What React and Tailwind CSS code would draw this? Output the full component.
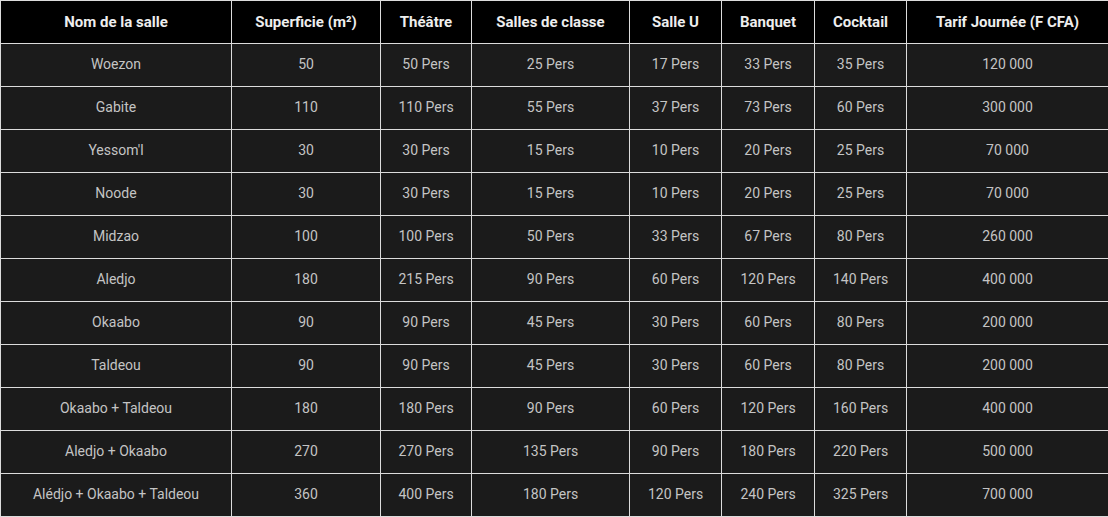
import React from "react";

const headers = [
  "Nom de la salle",
  "Superficie (m²)",
  "Théâtre",
  "Salles de classe",
  "Salle U",
  "Banquet",
  "Cocktail",
  "Tarif Journée (F CFA)",
];

const widths = [231, 149, 91, 158, 92, 93, 92, 202];

const rows = [
  ["Woezon", "50", "50 Pers", "25 Pers", "17 Pers", "33 Pers", "35 Pers", "120 000"],
  ["Gabite", "110", "110 Pers", "55 Pers", "37 Pers", "73 Pers", "60 Pers", "300 000"],
  ["Yessom'l", "30", "30 Pers", "15 Pers", "10 Pers", "20 Pers", "25 Pers", "70 000"],
  ["Noode", "30", "30 Pers", "15 Pers", "10 Pers", "20 Pers", "25 Pers", "70 000"],
  ["Midzao", "100", "100 Pers", "50 Pers", "33 Pers", "67 Pers", "80 Pers", "260 000"],
  ["Aledjo", "180", "215 Pers", "90 Pers", "60 Pers", "120 Pers", "140 Pers", "400 000"],
  ["Okaabo", "90", "90 Pers", "45 Pers", "30 Pers", "60 Pers", "80 Pers", "200 000"],
  ["Taldeou", "90", "90 Pers", "45 Pers", "30 Pers", "60 Pers", "80 Pers", "200 000"],
  ["Okaabo + Taldeou", "180", "180 Pers", "90 Pers", "60 Pers", "120 Pers", "160 Pers", "400 000"],
  ["Aledjo + Okaabo", "270", "270 Pers", "135 Pers", "90 Pers", "180 Pers", "220 Pers", "500 000"],
  ["Alédjo + Okaabo + Taldeou", "360", "400 Pers", "180 Pers", "120 Pers", "240 Pers", "325 Pers", "700 000"],
];

export default function App() {
  return (
    <div className="w-[1108px] h-[517px] bg-white font-['Roboto',sans-serif]">
      <table className="table-fixed border-collapse w-[1108px] text-[14px]">
        <colgroup>
          {widths.map((w, i) => (
            <col key={i} style={{ width: w }} />
          ))}
        </colgroup>
        <thead>
          <tr className="h-[43px]">
            {headers.map((h) => (
              <th
                key={h}
                className="border border-[#dcdcdc] bg-black text-[#eeeeee] text-[15px] font-bold text-center p-0"
              >
                {h}
              </th>
            ))}
          </tr>
        </thead>
        <tbody>
          {rows.map((r, i) => (
            <tr key={i} className="h-[43px]">
              {r.map((c, j) => (
                <td
                  key={j}
                  className="border border-[#dcdcdc] bg-[#1b1b1b] text-[#c4c4c4] text-center p-0 pb-[2px]"
                >
                  {c}
                </td>
              ))}
            </tr>
          ))}
        </tbody>
      </table>
    </div>
  );
}
